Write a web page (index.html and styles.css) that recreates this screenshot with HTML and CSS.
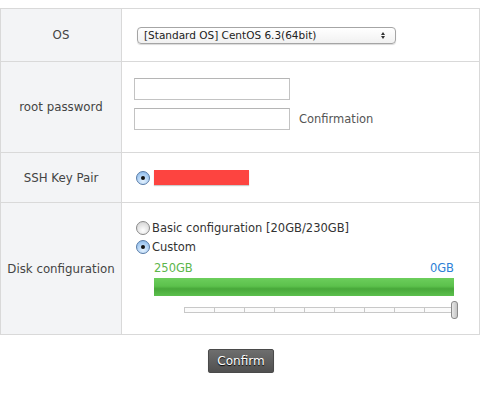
FILE: index.html
```html
<!DOCTYPE html>
<html lang="en">
<head>
  <meta charset="UTF-8" />
  <title>Server settings</title>
  <link rel="stylesheet" href="styles.css">
</head>
<body>
  <table class="form-table">
    <tr class="row-os">
      <th>OS</th>
      <td>
        <span class="select-wrap">
          <select class="os-select">
            <option>[Standard OS] CentOS 6.3(64bit)</option>
          </select>
        </span>
      </td>
    </tr>
    <tr class="row-pass">
      <th>root password</th>
      <td>
        <div class="pass-line"><input type="password" class="text-input" /></div>
        <div class="pass-line"><input type="password" class="text-input" /><span class="hint">Confirmation</span></div>
      </td>
    </tr>
    <tr class="row-ssh">
      <th>SSH Key Pair</th>
      <td>
        <label class="radio-line">
          <input type="radio" name="key" class="radio" checked />
          <span class="redacted"></span>
        </label>
      </td>
    </tr>
    <tr class="row-disk">
      <th>Disk configuration</th>
      <td>
        <label class="radio-line"><input type="radio" name="disk" class="radio" />Basic configuration [20GB/230GB]</label>
        <label class="radio-line"><input type="radio" name="disk" class="radio" checked />Custom</label>
        <div class="disk-box">
          <div class="disk-labels">
            <span class="used">250GB</span>
            <span class="free">0GB</span>
          </div>
          <div class="disk-bar"></div>
          <div class="slider">
            <div class="track">
              <span></span><span></span><span></span><span></span><span></span>
              <span></span><span></span><span></span><span></span>
            </div>
            <div class="thumb"></div>
          </div>
        </div>
      </td>
    </tr>
  </table>

  <div class="actions">
    <button class="btn-confirm">Confirm</button>
  </div>
</body>
</html>
```

FILE: styles.css
```css
* {
  box-sizing: border-box;
}

body {
  margin: 0;
  padding-top: 8px;
  background: #fff;
  font-family: 'DejaVu Sans', sans-serif;
  font-size: 11.5px;
  color: #333;
}

.form-table {
  width: 480px;
  border-collapse: collapse;
}

.form-table th,
.form-table td {
  border: 1px solid #d9d9d9;
  padding: 0;
}

.form-table th {
  width: 121px;
  background: #f3f4f6;
  font-weight: normal;
  font-size: 11.8px;
  color: #444;
  text-align: center;
}

.form-table td {
  padding-left: 12px;
}

.row-os { height: 53px; }
.row-pass { height: 91px; }
.row-ssh { height: 50px; }
.row-disk { height: 132px; }

.row-os td {
  padding-left: 15px;
}

.row-pass td {
  padding-bottom: 6px;
}

.select-wrap {
  position: relative;
  display: inline-block;
}

.select-wrap::after {
  content: "";
  position: absolute;
  right: 11px;
  top: 5px;
  width: 0;
  height: 0;
  border-left: 2px solid transparent;
  border-right: 2px solid transparent;
  border-bottom: 3px solid #333;
}

.select-wrap::before {
  content: "";
  position: absolute;
  right: 11px;
  top: 9px;
  width: 0;
  height: 0;
  border-left: 2px solid transparent;
  border-right: 2px solid transparent;
  border-top: 3px solid #333;
}

.os-select {
  appearance: none;
  -webkit-appearance: none;
  width: 259px;
  height: 17px;
  padding: 0 0 0 6px;
  border: 1px solid #a5a5a5;
  border-radius: 4px;
  background: linear-gradient(#fff, #f1f1f1);
  box-shadow: 0 1px 1px rgba(0, 0, 0, 0.15);
  font-family: 'DejaVu Sans', sans-serif;
  font-size: 10.5px;
  color: #222;
  line-height: 15px;
}

.pass-line {
  display: flex;
  align-items: center;
  gap: 9px;
}

.pass-line + .pass-line {
  margin-top: 8px;
}

.text-input {
  width: 156px;
  height: 22px;
  border: 1px solid #c3c3c3;
  border-top-color: #b5b5b5;
  background: #fff;
  margin: 0;
}

.hint {
  color: #555;
}

.radio-line {
  display: flex;
  align-items: center;
  gap: 2px;
  color: #333;
  height: 19px;
}

.radio {
  appearance: none;
  -webkit-appearance: none;
  width: 14px;
  height: 14px;
  margin: 0;
  border-radius: 50%;
  border: 1px solid #8a8a8a;
  background: radial-gradient(circle at 50% 70%, #ffffff, #dcdcdc 70%, #c8c8c8);
  position: relative;
  flex: none;
}

.radio:checked {
  border-color: #5a7da8;
  background: radial-gradient(circle at 50% 75%, #e4f2ff, #a9cdf2 60%, #7fb0e3);
}

.radio:checked::after {
  content: "";
  position: absolute;
  left: 4px;
  top: 4px;
  width: 4px;
  height: 4px;
  border-radius: 50%;
  background: #111;
}

.row-ssh td {
  padding-left: 14px;
}

.row-ssh .radio-line {
  gap: 4px;
}

.redacted {
  display: inline-block;
  width: 95px;
  height: 15px;
  background: #fd4440;
  box-shadow: 0 1px 1px rgba(0, 0, 0, 0.2);
}

.row-disk td {
  padding-left: 14px;
}

.disk-box {
  width: 305px;
  padding-left: 18px;
  margin-top: 4px;
}

.disk-labels {
  display: flex;
  justify-content: space-between;
  width: 300px;
  line-height: 14px;
}

.used {
  color: #5cb64a;
}

.free {
  color: #2c7fd6;
}

.disk-bar {
  width: 300px;
  height: 18px;
  margin-top: 3px;
  background: linear-gradient(#6cce5c, #5cc14c 45%, #48a83a 60%, #5cc04d);
}

.slider {
  position: relative;
  width: 275px;
  height: 18px;
  margin: 5px 0 0 30px;
}

.track {
  position: absolute;
  left: 0;
  top: 6px;
  width: 271px;
  height: 6px;
  display: flex;
  border: 1px solid #c8c8c8;
  background: #fbfbfb;
}

.track span {
  flex: 1;
  border-right: 1px solid #c8c8c8;
}

.track span:last-child {
  border-right: none;
}

.thumb {
  position: absolute;
  left: 267px;
  top: 0;
  width: 7px;
  height: 18px;
  border: 1px solid #8a8a8a;
  border-radius: 3px;
  background: linear-gradient(90deg, #e8e8e8, #c4c4c4);
}

.actions {
  display: flex;
  justify-content: center;
  padding-top: 14px;
  padding-right: 3px;
}

.btn-confirm {
  width: 66px;
  height: 24px;
  padding: 0;
  border: 1px solid #4a4a4a;
  border-radius: 2px;
  background: linear-gradient(#6e6e6e, #505050);
  color: #fff;
  font-family: 'DejaVu Sans', sans-serif;
  font-size: 12px;
  text-shadow: 0 1px 1px #000;
  box-shadow: 0 1px 1px rgba(0, 0, 0, 0.2);
}
```
